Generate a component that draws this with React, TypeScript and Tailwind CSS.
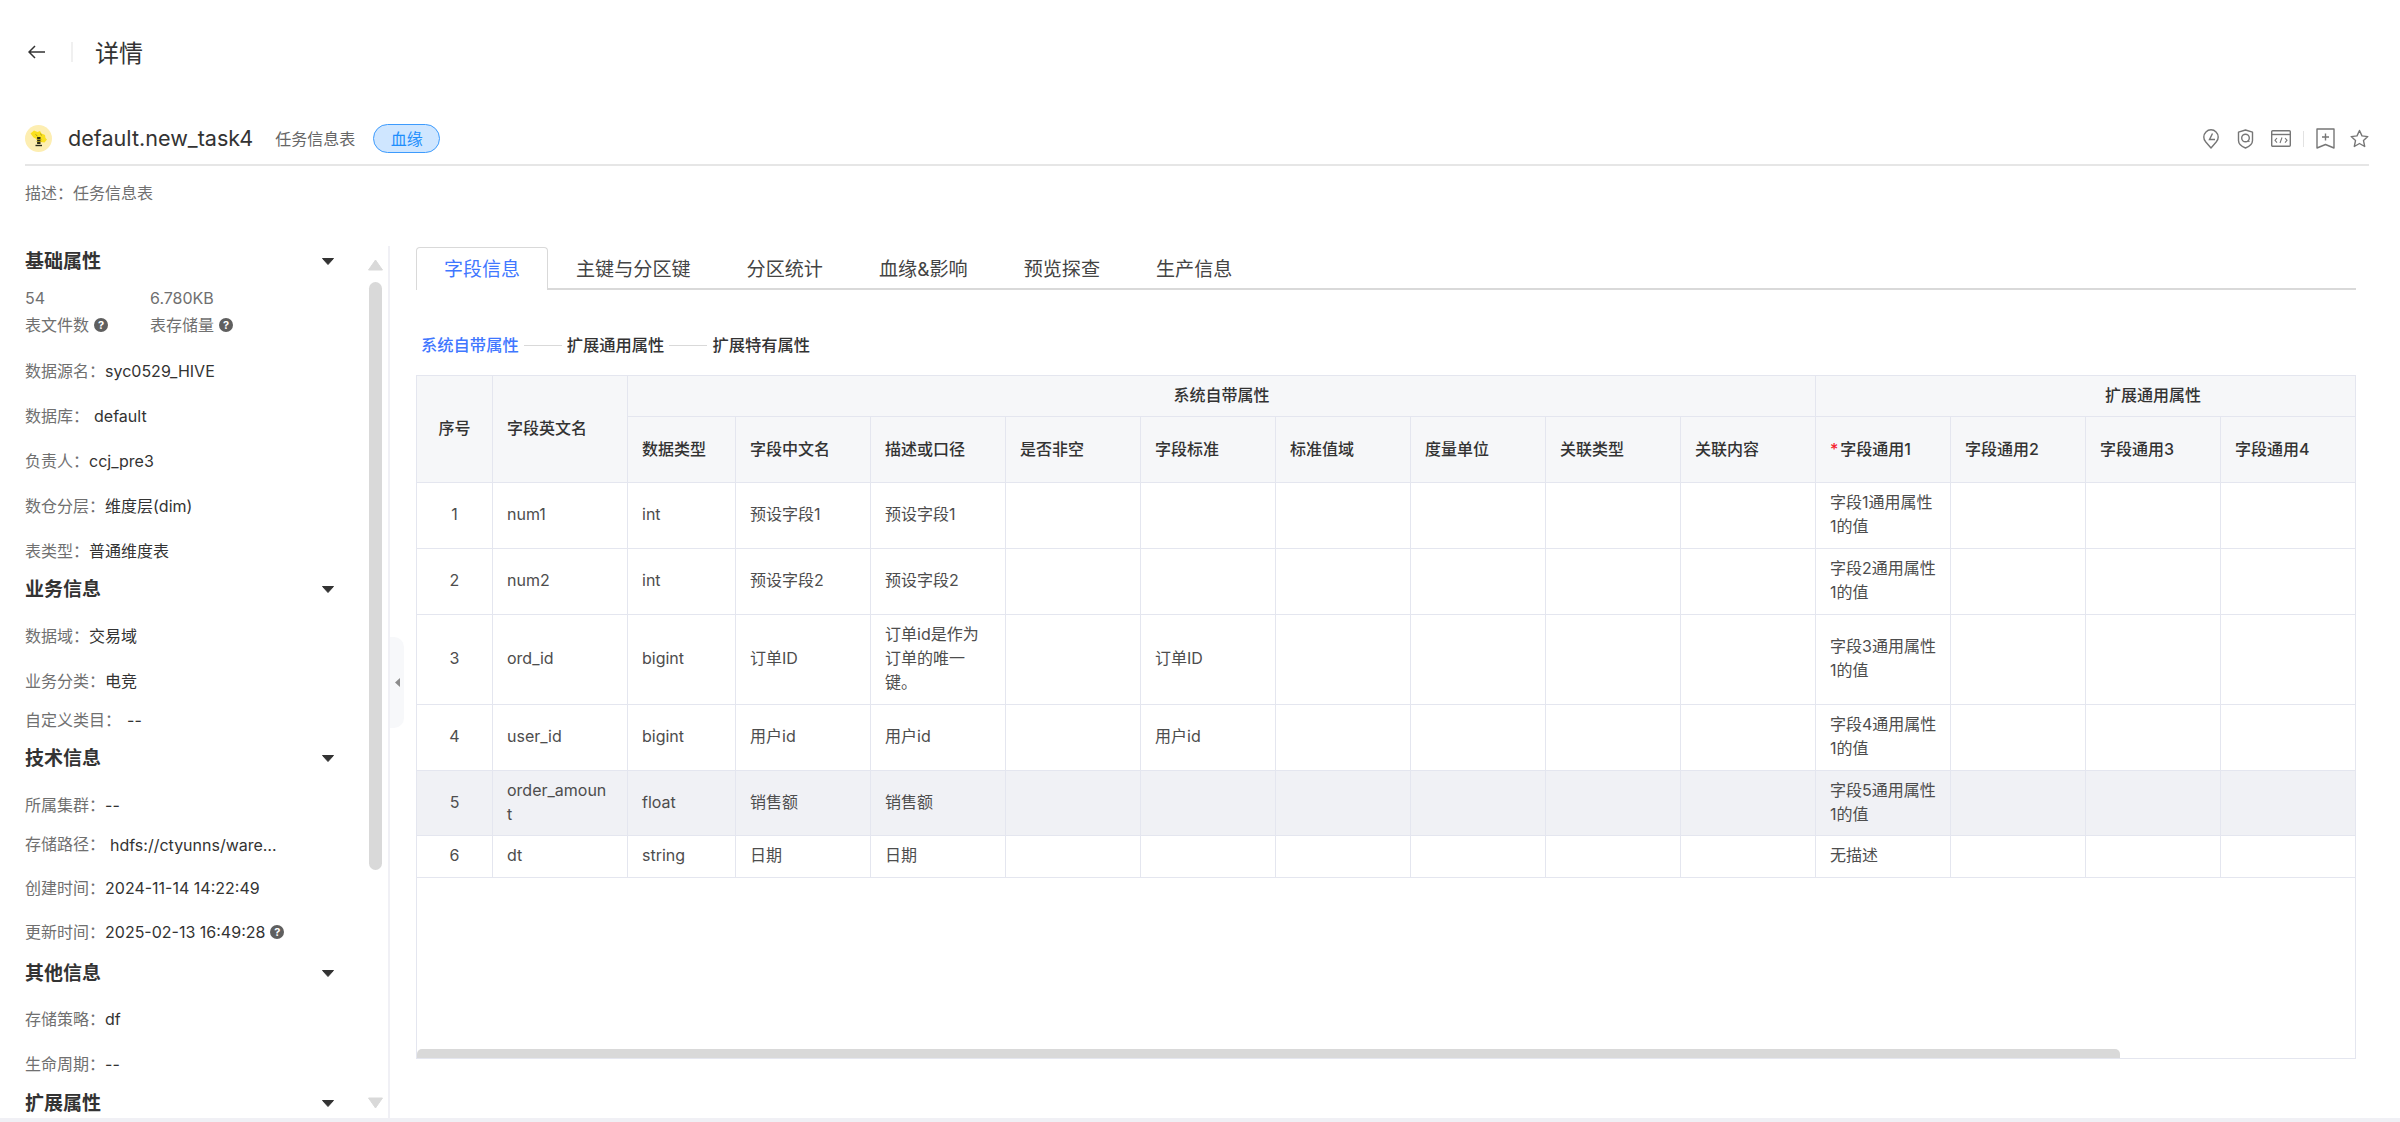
import type { ReactNode } from "react";

const FONT = "font-['Inter','Noto_Sans_CJK_SC',sans-serif]";

/* ---------- small drawings ---------- */

function Caret() {
  return (
    <svg width="12" height="7" viewBox="0 0 12 7" className="shrink-0">
      <path d="M0.5 0.5h11L6 6.5z" fill="#333" stroke="#333" strokeLinejoin="round" />
    </svg>
  );
}

function Help() {
  return (
    <span className="ml-[5px] inline-flex h-[14px] w-[14px] shrink-0 items-center justify-center rounded-full bg-[#5f5f5f] text-[11px] leading-none font-bold text-white">
      ?
    </span>
  );
}

function Logo() {
  return (
    <svg width="27" height="27" viewBox="0 0 27 27" className="shrink-0">
      <circle cx="13.5" cy="13.5" r="13.5" fill="#fdeeb2" />
      <path d="M5.500 8.500l3.500-3 3.500 1.500 2.500-1 1.500 2.500 3.500 1.500.5 3 1.500 1.500-2.500 3-4-.5-4-3-3-1.500z" fill="#f9e01f" />
      <path d="M10.500 9.500l2 1.500M15.500 8.500l1 2" stroke="#a8931a" strokeWidth="0.900" />
      <path d="M13.800 12v7" stroke="#2b2b17" strokeWidth="3.400" />
      <path d="M11.500 14.500h5M11.500 16.500h5" stroke="#c2ad1c" strokeWidth="0.800" />
      <path d="M10.500 20.500h6.500" stroke="#2b2b17" strokeWidth="1.400" />
    </svg>
  );
}

function ActionIcons() {
  const stroke = { stroke: "#767676", strokeWidth: 1.4, fill: "none" };
  return (
    <div className="flex items-center">
      <svg width="16" height="20" viewBox="0 0 16 20">
        <path d="M8 19l-5.200-6A7.200 7.200 0 1 1 13.200 13z" {...stroke} strokeLinejoin="round" />
        <path d="M9.500 4.500L6.500 10.500h5.500" {...stroke} />
      </svg>
      <svg width="17" height="20" viewBox="0 0 17 20" className="ml-[18px]">
        <path d="M8.500 1l7 2.200v8.300c0 3.600-3.200 6-7 7.500-3.800-1.500-7-3.900-7-7.500V3.200z" {...stroke} strokeLinejoin="round" />
        <circle cx="8.500" cy="9" r="3.800" {...stroke} />
        <path d="M10.800 11.500l1.600 1.200" {...stroke} />
      </svg>
      <svg width="20" height="17" viewBox="0 0 20 17" className="ml-[17px]">
        <rect x="0.700" y="0.700" width="18.600" height="15.600" rx="1" {...stroke} />
        <path d="M0.700 4.500h18.600" {...stroke} />
        <path d="M6 8l-2 2.300 2 2.300M14 8l2 2.300-2 2.300M11 7.500l-2 5.500" stroke="#767676" strokeWidth="1.100" fill="none" />
      </svg>
      <span className="mx-[12px] h-[16px] w-px bg-[#e2e2e2]" />
      <svg width="19" height="21" viewBox="0 0 19 21">
        <path d="M1 1h17v19l-8.500-3.500L1 20z" {...stroke} strokeLinejoin="round" />
        <path d="M9.500 5.500v7M6 9h7" {...stroke} />
      </svg>
      <svg width="19" height="19" viewBox="0 0 19 19" className="ml-[15px]">
        <path d="M9.500 1.500l2.500 5.400 5.800.7-4.300 4 1.200 5.900-5.200-3-5.200 3 1.200-5.900-4.300-4 5.800-.7z" {...stroke} strokeLinejoin="round" />
      </svg>
    </div>
  );
}

/* ---------- sidebar ---------- */

function SectionTitle({ title, className = "" }: { title: string; className?: string }) {
  return (
    <div className={`flex h-[30px] items-center justify-between pr-[54px] ${className}`}>
      <span className="text-[19px] leading-none font-bold text-[#333]">{title}</span>
      <Caret />
    </div>
  );
}

function Attr({
  label,
  children,
  className = "h-[45px]",
}: {
  label: string;
  children: ReactNode;
  className?: string;
}) {
  return (
    <div className={`flex items-center pb-[2px] text-[16px] text-[#333] ${className}`}>
      <span className="shrink-0 text-[#707070]">{label}：</span>
      {children}
    </div>
  );
}

function Sidebar() {
  return (
    <aside className="relative h-full w-[390px] shrink-0 overflow-hidden border-r-2 border-[#f0f0f5] pl-[25px]">
      <SectionTitle title="基础属性" />
      <div className="flex h-[73px] gap-[37px] pt-[7px] text-[16px] text-[#707070]">
        <div className="w-[88px]">
          <div className="flex h-[30px] items-center">54</div>
          <div className="flex h-[26px] items-center pb-[2px] whitespace-nowrap">
            表文件数
            <Help />
          </div>
        </div>
        <div>
          <div className="flex h-[30px] items-center">6.780KB</div>
          <div className="flex h-[26px] items-center pb-[2px] whitespace-nowrap">
            表存储量
            <Help />
          </div>
        </div>
      </div>
      <Attr label="数据源名">syc0529_HIVE</Attr>
      <Attr label="数据库">
        <span className="ml-[5px]">default</span>
      </Attr>
      <Attr label="负责人">ccj_pre3</Attr>
      <Attr label="数仓分层">维度层(dim)</Attr>
      <Attr label="表类型">普通维度表</Attr>

      <SectionTitle title="业务信息" />
      <div className="pt-[10px]">
        <Attr label="数据域">交易域</Attr>
        <Attr label="业务分类">电竞</Attr>
        <Attr label="自定义类目" className="h-[33px]">
          <span className="ml-[6px]">--</span>
        </Attr>
      </div>

      <SectionTitle title="技术信息" className="mt-[6px]" />
      <div className="pt-[10px]">
        <Attr label="所属集群">--</Attr>
        <Attr label="存储路径" className="h-[34px]">
          <span className="ml-[5px] h-[20px] w-[168px] truncate leading-[22px]">
            hdfs://ctyunns/warehouse/default/new_task4
          </span>
        </Attr>
        <Attr label="创建时间" className="h-[54px]">
          2024-11-14 14:22:49
        </Attr>
        <Attr label="更新时间" className="h-[34px]">
          2025-02-13 16:49:28
          <Help />
        </Attr>
      </div>

      <SectionTitle title="其他信息" className="mt-[8px]" />
      <div className="pt-[9px]">
        <Attr label="存储策略">df</Attr>
        <Attr label="生命周期">--</Attr>
      </div>
      <SectionTitle title="扩展属性" className="mt-px" />

      {/* scrollbar */}
      <svg width="15" height="12" viewBox="0 0 15 12" className="absolute top-[13px] left-[368px]">
        <path d="M7.500 1L14.500 11H0.500z" fill="#d9d9d9" stroke="#d9d9d9" strokeLinejoin="round" />
      </svg>
      <div className="absolute top-[36px] left-[369px] h-[588px] w-[13px] rounded-full bg-[#d9d9d9]" />
      <svg width="15" height="12" viewBox="0 0 15 12" className="absolute top-[851px] left-[368px]">
        <path d="M0.500 1H14.500L7.500 11z" fill="#d9d9d9" stroke="#d9d9d9" strokeLinejoin="round" />
      </svg>
    </aside>
  );
}

/* ---------- table ---------- */

const SYSTEM_HEADERS = ["数据类型", "字段中文名", "描述或口径", "是否非空", "字段标准", "标准值域", "度量单位", "关联类型", "关联内容"];
const COMMON_HEADERS = ["字段通用2", "字段通用3", "字段通用4", "字段通用5"];

interface Row {
  id: number;
  name: ReactNode;
  type: string;
  cn: string;
  desc: ReactNode;
  standard?: string;
  common: ReactNode;
  height: string;
  active?: boolean;
}

const commonValue = (n: number) => (
  <span className="whitespace-nowrap">
    字段{n}通用属性
    <br />
    1的值
  </span>
);

const ROWS: Row[] = [
  { id: 1, name: "num1", type: "int", cn: "预设字段1", desc: "预设字段1", common: commonValue(1), height: "h-[66px]" },
  { id: 2, name: "num2", type: "int", cn: "预设字段2", desc: "预设字段2", common: commonValue(2), height: "h-[66px]" },
  {
    id: 3,
    name: "ord_id",
    type: "bigint",
    cn: "订单ID",
    desc: "订单id是作为订单的唯一键。",
    standard: "订单ID",
    common: commonValue(3),
    height: "h-[90px]",
  },
  { id: 4, name: "user_id", type: "bigint", cn: "用户id", desc: "用户id", standard: "用户id", common: commonValue(4), height: "h-[66px]" },
  {
    id: 5,
    name: (
      <>
        order_amoun
        <br />t
      </>
    ),
    type: "float",
    cn: "销售额",
    desc: "销售额",
    common: commonValue(5),
    height: "h-[65px]",
    active: true,
  },
  { id: 6, name: "dt", type: "string", cn: "日期", desc: "日期", common: "无描述", height: "h-[42px]" },
];

const TH = "border border-[#e4e6ef] bg-[#f6f7f9] px-[14px] pb-[2px] text-[16px] font-medium text-[#333]";
const TD = "border border-[#e4e6ef] px-[14px] pb-[3px] align-middle text-[16px] leading-[24px] break-all text-[#4d4d4d]";

function FieldTable() {
  return (
    <div className="relative h-[684px] w-[1940px] overflow-hidden border border-[#e4e6ef]">
      <table className="-mt-px -ml-px w-[2074px] table-fixed border-collapse">
        <colgroup>
          <col className="w-[76px]" />
          <col className="w-[135px]" />
          <col className="w-[108px]" />
          {Array.from({ length: 13 }, (_, i) => (
            <col key={i} className="w-[135px]" />
          ))}
        </colgroup>
        <thead>
          <tr className="h-[41px]">
            <th rowSpan={2} className={`${TH} text-center`}>
              序号
            </th>
            <th rowSpan={2} className={`${TH} text-left`}>
              字段英文名
            </th>
            <th colSpan={9} className={`${TH} text-center`}>
              系统自带属性
            </th>
            <th colSpan={5} className={`${TH} text-center`}>
              扩展通用属性
            </th>
          </tr>
          <tr className="h-[66px]">
            {SYSTEM_HEADERS.map((h) => (
              <th key={h} className={`${TH} text-left`}>
                {h}
              </th>
            ))}
            <th className={`${TH} text-left`}>
              <span className="mr-[2px] text-[#f5222d]">*</span>字段通用1
            </th>
            {COMMON_HEADERS.map((h) => (
              <th key={h} className={`${TH} text-left`}>
                {h}
              </th>
            ))}
          </tr>
        </thead>
        <tbody>
          {ROWS.map((r) => (
            <tr key={r.id} className={`${r.height} ${r.active ? "bg-[#f0f1f5]" : ""}`}>
              <td className={`${TD} text-center`}>{r.id}</td>
              <td className={TD}>{r.name}</td>
              <td className={TD}>{r.type}</td>
              <td className={TD}>{r.cn}</td>
              <td className={TD}>{r.desc}</td>
              <td className={TD} />
              <td className={TD}>{r.standard}</td>
              <td className={TD} />
              <td className={TD} />
              <td className={TD} />
              <td className={TD} />
              <td className={TD}>{r.common}</td>
              <td className={TD} />
              <td className={TD} />
              <td className={TD} />
              <td className={TD} />
            </tr>
          ))}
        </tbody>
      </table>
      {/* horizontal scrollbar */}
      <div className="absolute bottom-[-1px] left-0 h-[10px] w-[1703px] rounded-t-[5px] bg-[#d9d9d9]" />
    </div>
  );
}

const TABS = ["字段信息", "主键与分区键", "分区统计", "血缘&影响", "预览探查", "生产信息"];

function Steps() {
  return (
    <div className="ml-[5px] flex h-[30px] items-center text-[16.3px] font-medium text-[#333]">
      <span className="text-[#3f77ff]">系统自带属性</span>
      <span className="mx-[5px] h-px w-[38px] bg-[#d9d9d9]" />
      <span>扩展通用属性</span>
      <span className="mx-[5px] h-px w-[38px] bg-[#d9d9d9]" />
      <span>扩展特有属性</span>
    </div>
  );
}

export default function App() {
  return (
    <div className={`flex h-[1122px] w-full flex-col overflow-hidden bg-white ${FONT}`}>
      {/* top bar */}
      <div className="flex h-[104px] shrink-0 items-center pl-[28px]">
        <svg width="18" height="14" viewBox="0 0 18 14">
          <path d="M17 7H1.500M7 1L1 7l6 6" stroke="#333" strokeWidth="1.500" fill="none" />
        </svg>
        <span className="ml-[25px] h-[20px] w-[2px] bg-[#f0f0f0]" />
        <span className="ml-[22px] pt-[3px] text-[24px] text-[#333]">详情</span>
      </div>

      {/* table heading */}
      <div className="ml-[25px] flex h-[62px] w-[2344px] shrink-0 items-center border-b-2 border-[#e6e6e6] pt-[9px]">
        <Logo />
        <span className="ml-[16px] text-[21.6px] text-[#333]">default.new_task4</span>
        <span className="ml-[22px] text-[16px] text-[#666]">任务信息表</span>
        <span className="ml-[18px] flex h-[29px] w-[67px] items-center justify-center rounded-full border border-[#3d9bfd] bg-[#cfe6ff] text-[16px] text-[#1e8efc]">
          血缘
        </span>
        <div className="ml-auto">
          <ActionIcons />
        </div>
      </div>
      <div className="ml-[25px] flex h-[54px] shrink-0 items-center text-[16px] text-[#707070]">描述：任务信息表</div>

      {/* body */}
      <div className="mt-[26px] flex min-h-0 flex-1">
        <Sidebar />
        <div className="relative flex-1 pt-px pl-[26px]">
          <button className="absolute top-[391px] left-0 flex h-[91px] w-[14px] items-center justify-center rounded-r-[10px] bg-[#f7f8fa]">
            <svg width="5" height="9" viewBox="0 0 5 9">
              <path d="M5 0v9L0 4.500z" fill="#8c8c8c" />
            </svg>
          </button>
          <div className="flex h-[43px] w-[1940px] border-b-2 border-[#d9d9d9]">
            {TABS.map((t, i) =>
              i === 0 ? (
                <div
                  key={t}
                  className="-mb-[2px] flex h-[43px] items-center rounded-t-[4px] border border-b-0 border-[#d9d9d9] bg-white px-[27px] pt-[3px] text-[19px] text-[#3f77ff]"
                >
                  {t}
                </div>
              ) : (
                <div key={t} className="flex items-center px-[28px] pt-[3px] text-[19.1px] text-[#444]">
                  {t}
                </div>
              ),
            )}
          </div>
          <div className="mt-[40px] mb-[15px]">
            <Steps />
          </div>
          <FieldTable />
        </div>
      </div>
      <div className="h-[4px] shrink-0 bg-[#f0f0f5]" />
    </div>
  );
}
